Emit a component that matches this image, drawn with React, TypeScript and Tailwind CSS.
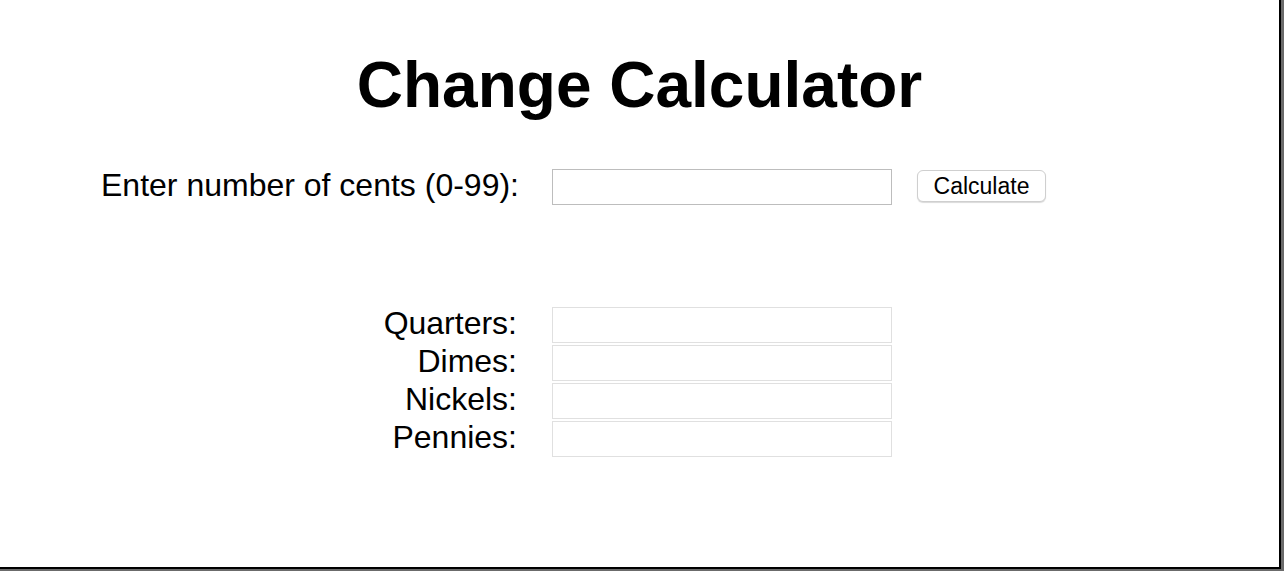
const coins = ["Quarters", "Dimes", "Nickels", "Pennies"];

export default function App() {
  return (
    <div className="h-[571px] w-full bg-[#6b6b6b] font-['Liberation_Sans',Arial,sans-serif] text-black">
      <div className="h-[569px] w-[1281px] border-r-2 border-b-2 border-black bg-white">
        <h1 className="pt-[49px] text-center text-[64px] font-bold leading-[72px]">
          Change Calculator
        </h1>

        <div className="mt-[48px] flex items-start pl-[101px]">
          <label className="w-[416px] whitespace-nowrap text-right text-[32px] leading-[33px]">
            Enter number of cents (0-99):
          </label>
          <input
            type="text"
            className="ml-[35px] h-[36px] w-[340px] border border-[#bdbdbd] bg-white px-2 text-[20px] outline-none"
          />
          <button className="ml-[25px] mt-[1px] h-[32px] w-[129px] rounded-[6px] border border-[#cfcfcf] bg-white pt-[1px] text-[23px] leading-none shadow-[0_1px_1px_rgba(0,0,0,0.15)]">
            Calculate
          </button>
        </div>

        <div className="mt-[102px] flex flex-col gap-[2px] pl-[101px]">
          {coins.map((coin) => (
            <div key={coin} className="flex items-start">
              <label className="w-[416px] text-right text-[32px] leading-[32px]">
                {coin}:
              </label>
              <input
                type="text"
                readOnly
                className="ml-[35px] h-[36px] w-[340px] border border-[#e0e0e0] bg-white px-2 text-[20px] outline-none"
              />
            </div>
          ))}
        </div>
      </div>
    </div>
  );
}
